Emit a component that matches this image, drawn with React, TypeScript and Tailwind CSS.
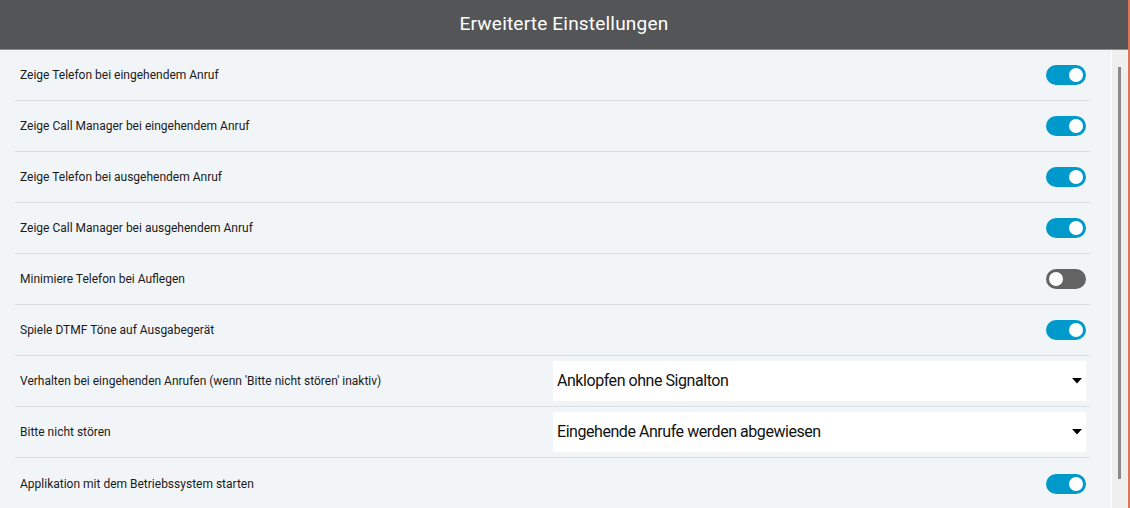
import React from "react";

type Row =
  | { label: string; kind: "toggle"; on: boolean }
  | { label: string; kind: "select"; value: string };

const rows: Row[] = [
  { label: "Zeige Telefon bei eingehendem Anruf", kind: "toggle", on: true },
  { label: "Zeige Call Manager bei eingehendem Anruf", kind: "toggle", on: true },
  { label: "Zeige Telefon bei ausgehendem Anruf", kind: "toggle", on: true },
  { label: "Zeige Call Manager bei ausgehendem Anruf", kind: "toggle", on: true },
  { label: "Minimiere Telefon bei Auflegen", kind: "toggle", on: false },
  { label: "Spiele DTMF Töne auf Ausgabegerät", kind: "toggle", on: true },
  {
    label: "Verhalten bei eingehenden Anrufen (wenn 'Bitte nicht stören' inaktiv)",
    kind: "select",
    value: "Anklopfen ohne Signalton",
  },
  { label: "Bitte nicht stören", kind: "select", value: "Eingehende Anrufe werden abgewiesen" },
  { label: "Applikation mit dem Betriebssystem starten", kind: "toggle", on: true },
];

function Toggle({ on }: { on: boolean }) {
  return (
    <div
      className={
        on
          ? "flex h-[20px] w-[40px] items-center justify-end rounded-full bg-[#0099cc] px-[3px]"
          : "flex h-[20px] w-[40px] items-center justify-start rounded-full bg-[#636363] px-[3px]"
      }
    >
      <div className="h-[14px] w-[14px] rounded-full bg-white" />
    </div>
  );
}

function Select({ value }: { value: string }) {
  return (
    <div className="flex h-[40px] w-1/2 items-center justify-between bg-white pl-[4px] pr-[3px]">
      <span className="text-[16px] text-[#111] [font-family:Roboto,sans-serif] tracking-[-0.45px]">{value}</span>
      <svg width="10" height="6" viewBox="0 0 10 6" className="mr-[1px]">
        <polygon points="0,0 10,0 5,5.5" fill="#000" />
      </svg>
    </div>
  );
}

export default function App() {
  return (
    <div className="flex h-[508px] w-[1130px] flex-col overflow-hidden border-r-2 border-[#e0735a] bg-[#f2f5f8] [font-family:Roboto,sans-serif]">
      <div className="flex h-[50px] shrink-0 items-center justify-center border-b border-[#8d8e90] bg-[#545557]">
        <span className="text-[19px] text-white tracking-[0.2px]">Erweiterte Einstellungen</span>
      </div>
      <div className="flex min-h-0 flex-1">
        <div className="flex-1 pr-[20px]">
          {rows.map((r, i) => (
            <div
              key={i}
              className={
                i < rows.length - 1
                  ? "ml-[15px] flex h-[51px] items-center justify-between border-b border-[#dcdfe2] pl-[5px] pr-[5px]"
                  : "ml-[15px] flex h-[51px] items-center justify-between pl-[5px] pr-[5px]"
              }
            >
              <span className="text-[12px] text-[#1a1a1a]">{r.label}</span>
              {r.kind === "toggle" ? <Toggle on={r.on} /> : <Select value={r.value} />}
            </div>
          ))}
        </div>
        <div className="w-[17px] shrink-0 border-l border-white bg-[#efefef] pt-[17px]">
          <div className="ml-[6px] h-[412px] w-[3px] bg-[#8a8a8a]" />
        </div>
      </div>
    </div>
  );
}
